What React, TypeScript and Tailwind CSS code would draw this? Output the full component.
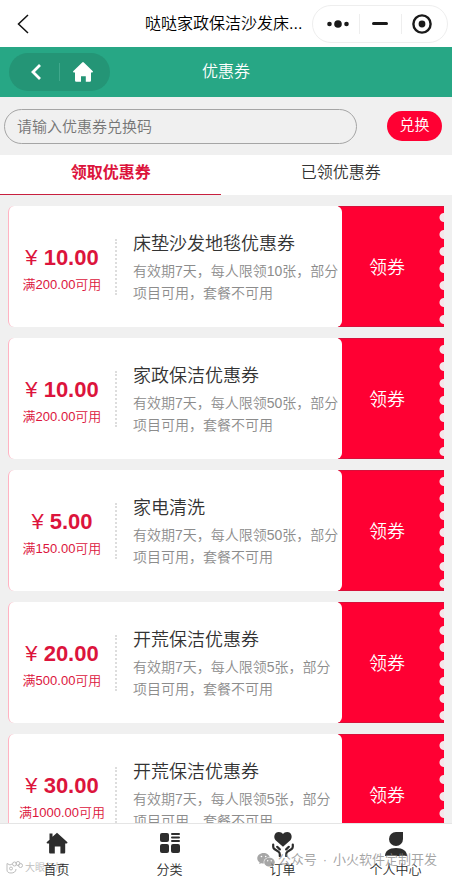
import { useState } from "react";
import { AiFillWechat } from "react-icons/ai";

interface Coupon {
  amount: string;
  limit: string;
  title: string;
  desc: string;
}

const COUPONS: Coupon[] = [
  { amount: "10.00", limit: "满200.00可用", title: "床垫沙发地毯优惠券", desc: "有效期7天，每人限领10张，部分项目可用，套餐不可用" },
  { amount: "10.00", limit: "满200.00可用", title: "家政保洁优惠券", desc: "有效期7天，每人限领50张，部分项目可用，套餐不可用" },
  { amount: "5.00", limit: "满150.00可用", title: "家电清洗", desc: "有效期7天，每人限领50张，部分项目可用，套餐不可用" },
  { amount: "20.00", limit: "满500.00可用", title: "开荒保洁优惠券", desc: "有效期7天，每人限领5张，部分项目可用，套餐不可用" },
  { amount: "30.00", limit: "满1000.00可用", title: "开荒保洁优惠券", desc: "有效期7天，每人限领5张，部分项目可用，套餐不可用" },
];

const TABS = ["领取优惠券", "已领优惠券"];

const HomeIcon = () => (
  <svg viewBox="0 0 22 22" className="h-[22px] w-[22px]" fill="currentColor">
    <path d="M3.5 1.5h3v3.2L11 .8l10.2 9.3c.6.6.2 1.3-.6 1.3h-1.4v8.9c0 .8-.5 1.3-1.3 1.3h-3.5v-7H8.8v7H4.4c-.8 0-1.3-.5-1.3-1.3v-8.9H1.5c-.8 0-1.2-.7-.6-1.3l2.6-2.4z" />
  </svg>
);

const CategoryIcon = () => (
  <svg viewBox="0 0 22 22" className="h-[22px] w-[22px]" fill="currentColor">
    <rect x="1" y="1" width="9" height="9" rx="2" />
    <rect x="1" y="12" width="9" height="9" rx="2" />
    <rect x="12" y="12" width="9" height="9" rx="2" />
    <rect x="12" y="1" width="9" height="2" rx="1" />
    <rect x="12" y="4.5" width="9" height="2" rx="1" />
    <rect x="12" y="8" width="9" height="2" rx="1" />
  </svg>
);

const OrderIcon = () => (
  <svg viewBox="0 0 22 25" className="h-[25px] w-[22px]" fill="currentColor">
    <path d="M11 14.8 3.600 8.200C1 5.200 2.500 0 6.800 0c1.900 0 3.400.8 4.200 2 .8-1.200 2.300-2 4.200-2 4.300 0 5.800 5.200 3.200 8.200z" />
    <path
      d="M1.200 12.500v2.300c0 1 .4 1.600 1.200 2.200l4 2.700c1 .7 1.400 1.400 1.400 2.600v1.700M5.200 14.800l2.600 2.600M20.800 12.500v2.300c0 1-.4 1.600-1.200 2.200l-4 2.700c-1 .7-1.400 1.400-1.400 2.600v1.700M16.800 14.800l-2.600 2.600"
      fill="none"
      stroke="currentColor"
      strokeWidth="2.2"
      strokeLinecap="round"
    />
  </svg>
);

const UserIcon = () => (
  <svg viewBox="0 0 22 25" className="h-[25px] w-[22px]" fill="currentColor">
    <path d="M11 0h7v7a7 7 0 1 1-7-7z" />
    <path d="M0 24c0-5 4-8 11-8s11 3 11 8z" />
  </svg>
);

const NAV_ITEMS = [
  { label: "首页", icon: <HomeIcon /> },
  { label: "分类", icon: <CategoryIcon /> },
  { label: "订单", icon: <OrderIcon /> },
  { label: "个人中心", icon: <UserIcon /> },
];

const TitleBar = () => (
  <header className="flex h-[47px] shrink-0 items-center bg-white pr-1 pl-3">
    <button aria-label="返回" className="flex w-[133px] items-center">
      <svg viewBox="0 0 22 22" className="h-[22px] w-[22px]" fill="none" stroke="#111" strokeWidth="1.5">
        <path d="m16 2-9.500 9 9.500 9" />
      </svg>
    </button>
    <h1 className="flex-1 text-base whitespace-nowrap text-black">哒哒家政保洁沙发床...</h1>
    <div className="ml-2 flex h-[38px] w-[136px] shrink-0 items-center rounded-full border border-[#eeeeee]">
      <button aria-label="更多" className="flex flex-1 justify-center pl-1">
        <svg viewBox="0 0 22 8" className="h-2 w-[22px]" fill="#1a1a1a">
          <circle cx="2.5" cy="4" r="2.3" />
          <circle cx="11" cy="4" r="3.8" />
          <circle cx="19.5" cy="4" r="2.3" />
        </svg>
      </button>
      <button aria-label="最小化" className="flex h-5 w-[43px] items-center justify-center border-x border-[#eeeeee]">
        <span className="h-[3px] w-4 rounded-full bg-[#1a1a1a]" />
      </button>
      <button aria-label="关闭" className="flex flex-1 justify-center pr-1">
        <svg viewBox="0 0 20 20" className="h-5 w-5">
          <circle cx="10" cy="10" r="8.6" fill="none" stroke="#1a1a1a" strokeWidth="2.4" />
          <circle cx="10" cy="10" r="3.4" fill="#1a1a1a" />
        </svg>
      </button>
    </div>
  </header>
);

const PageBar = () => (
  <div className="grid h-[50px] shrink-0 grid-cols-[1fr_auto_1fr] items-center bg-[#27a785] px-[9px] text-white">
    <div className="flex h-[38px] w-[101px] items-center rounded-full bg-[#249576]">
      <button aria-label="上一页" className="flex h-[18px] flex-1 items-center justify-center border-r border-[#3fa88c] pl-1">
        <svg viewBox="0 0 16 18" className="h-[18px] w-4" fill="none" stroke="currentColor" strokeWidth="2.8">
          <path d="M12 2 5 9l7 7" />
        </svg>
      </button>
      <button aria-label="首页" className="flex flex-1 justify-center pr-1">
        <svg viewBox="0 0 20 20" className="h-5 w-5" fill="currentColor">
          <path d="M9.200.4q.8-.7 1.600 0l8.800 8.700c.6.7.3 1.300-.5 1.300H18v8.200q0 1.200-1.200 1.200h-4v-5.600H8v5.600H3.200Q2 19.800 2 18.600v-8.200H.9c-.8 0-1.100-.6-.5-1.300z" />
        </svg>
      </button>
    </div>
    <h2 className="text-base">优惠券</h2>
  </div>
);

const CouponCard = ({ coupon }: { coupon: Coupon }) => (
  <li className="flex h-[121px] shrink-0">
    <div className="relative z-10 flex min-w-0 flex-1 items-center rounded-md border-l border-[#ffb3c2] bg-white">
      <div className="w-[106px] shrink-0 pt-2 text-center text-[#dc143c]">
        <p className="text-[22px] leading-7">
          ¥ <span className="font-bold">{coupon.amount}</span>
        </p>
        <p className="text-[13px] leading-[26px] whitespace-nowrap">{coupon.limit}</p>
      </div>
      <div className="h-14 shrink-0 border-l-2 border-dotted border-[#dddddd]" />
      <div className="min-w-0 flex-1 pt-0.5 pl-4">
        <h3 className="text-lg leading-6 text-[#333333]">{coupon.title}</h3>
        <p className="mt-1 text-sm leading-[22px] text-[#8c8c8c]">{coupon.desc}</p>
      </div>
    </div>
    <button className="relative -ml-1 w-[106px] shrink-0 border-y border-[#d8103a] bg-[#ff0033] pt-0.5 pr-2 text-lg text-white">
      领券
      <span className="absolute inset-y-0 right-0 w-[5px] bg-[radial-gradient(circle_at_right,#f5e6ea_4px,transparent_5px)] bg-[length:5px_17px] bg-[position:0_2px]" />
    </button>
  </li>
);

const App = () => {
  const [code, setCode] = useState("");
  const [activeTab, setActiveTab] = useState(0);

  return (
    <div className="flex h-screen flex-col bg-[#f0f0f0] font-['Liberation_Sans','Noto_Sans_CJK_SC',sans-serif] font-[350]">
      <TitleBar />
      <PageBar />

      <form
        className="flex h-[58px] shrink-0 items-center justify-between pr-[10px] pl-1"
        onSubmit={e => e.preventDefault()}
      >
        <input
          aria-label="优惠券兑换码"
          value={code}
          onChange={e => setCode(e.target.value)}
          placeholder="请输入优惠券兑换码"
          className="mr-[30px] h-[35px] min-w-0 flex-1 rounded-full border border-[#a5a5a5] px-3 text-[15px] placeholder:text-[#757575]"
        />
        <button className="h-[30px] w-[55px] rounded-full bg-[#ff0033] pb-0.5 text-[15px] text-white">兑换</button>
      </form>

      <div className="grid h-10 shrink-0 grid-cols-[49%_51%] bg-white">
        {TABS.map((tab, index) => (
          <button
            key={tab}
            onClick={() => setActiveTab(index)}
            className={`border-b pb-1 text-base last:pl-2 ${
              activeTab === index ? "border-[#c8203f] font-bold text-[#dc143c]" : "border-transparent text-[#333333]"
            }`}
          >
            {tab}
          </button>
        ))}
      </div>

      <ul className="flex min-h-0 flex-1 flex-col gap-[11px] overflow-hidden px-2 pt-[11px]">
        {COUPONS.map((coupon, index) => (
          <CouponCard key={index} coupon={coupon} />
        ))}
      </ul>

      <nav className="relative flex h-[55px] shrink-0 border-t border-[#e5e5e5] bg-white text-[#2d2d2d]">
        <div className="pointer-events-none absolute bottom-1 left-1.5 flex items-center gap-0.5 text-[#bdbdbd]">
          <svg viewBox="0 0 17 13" className="h-[13px] w-[17px]" fill="none" stroke="currentColor">
            <path d="M1 2.500 4 4l2-1M1 2.500V9c0 2 1.500 3 4 3s5-1 5-4" />
            <circle cx="5" cy="7.5" r="1.5" />
            <circle cx="8.5" cy="3" r="2" />
            <circle cx="12" cy="2.5" r="2" />
            <circle cx="14.5" cy="4.5" r="2" />
          </svg>
          <span className="text-[10px] leading-3">大眼仔旭</span>
        </div>
        {NAV_ITEMS.map(item => (
          <a key={item.label} href="#" className="relative flex flex-1 flex-col items-center pt-2 text-[13px] leading-4">
            <span className="flex h-8 items-start">{item.icon}</span>
            {item.label}
          </a>
        ))}
        <div className="pointer-events-none absolute top-[26px] right-[15px] flex items-center gap-0.5 text-[13px] leading-5 font-normal text-[#888888]/75">
          <AiFillWechat className="h-5 w-5" />
          <span>公众号</span>
          <span className="px-1">·</span>
          <span>小火软件定制开发</span>
        </div>
      </nav>
    </div>
  );
};

export default App;
